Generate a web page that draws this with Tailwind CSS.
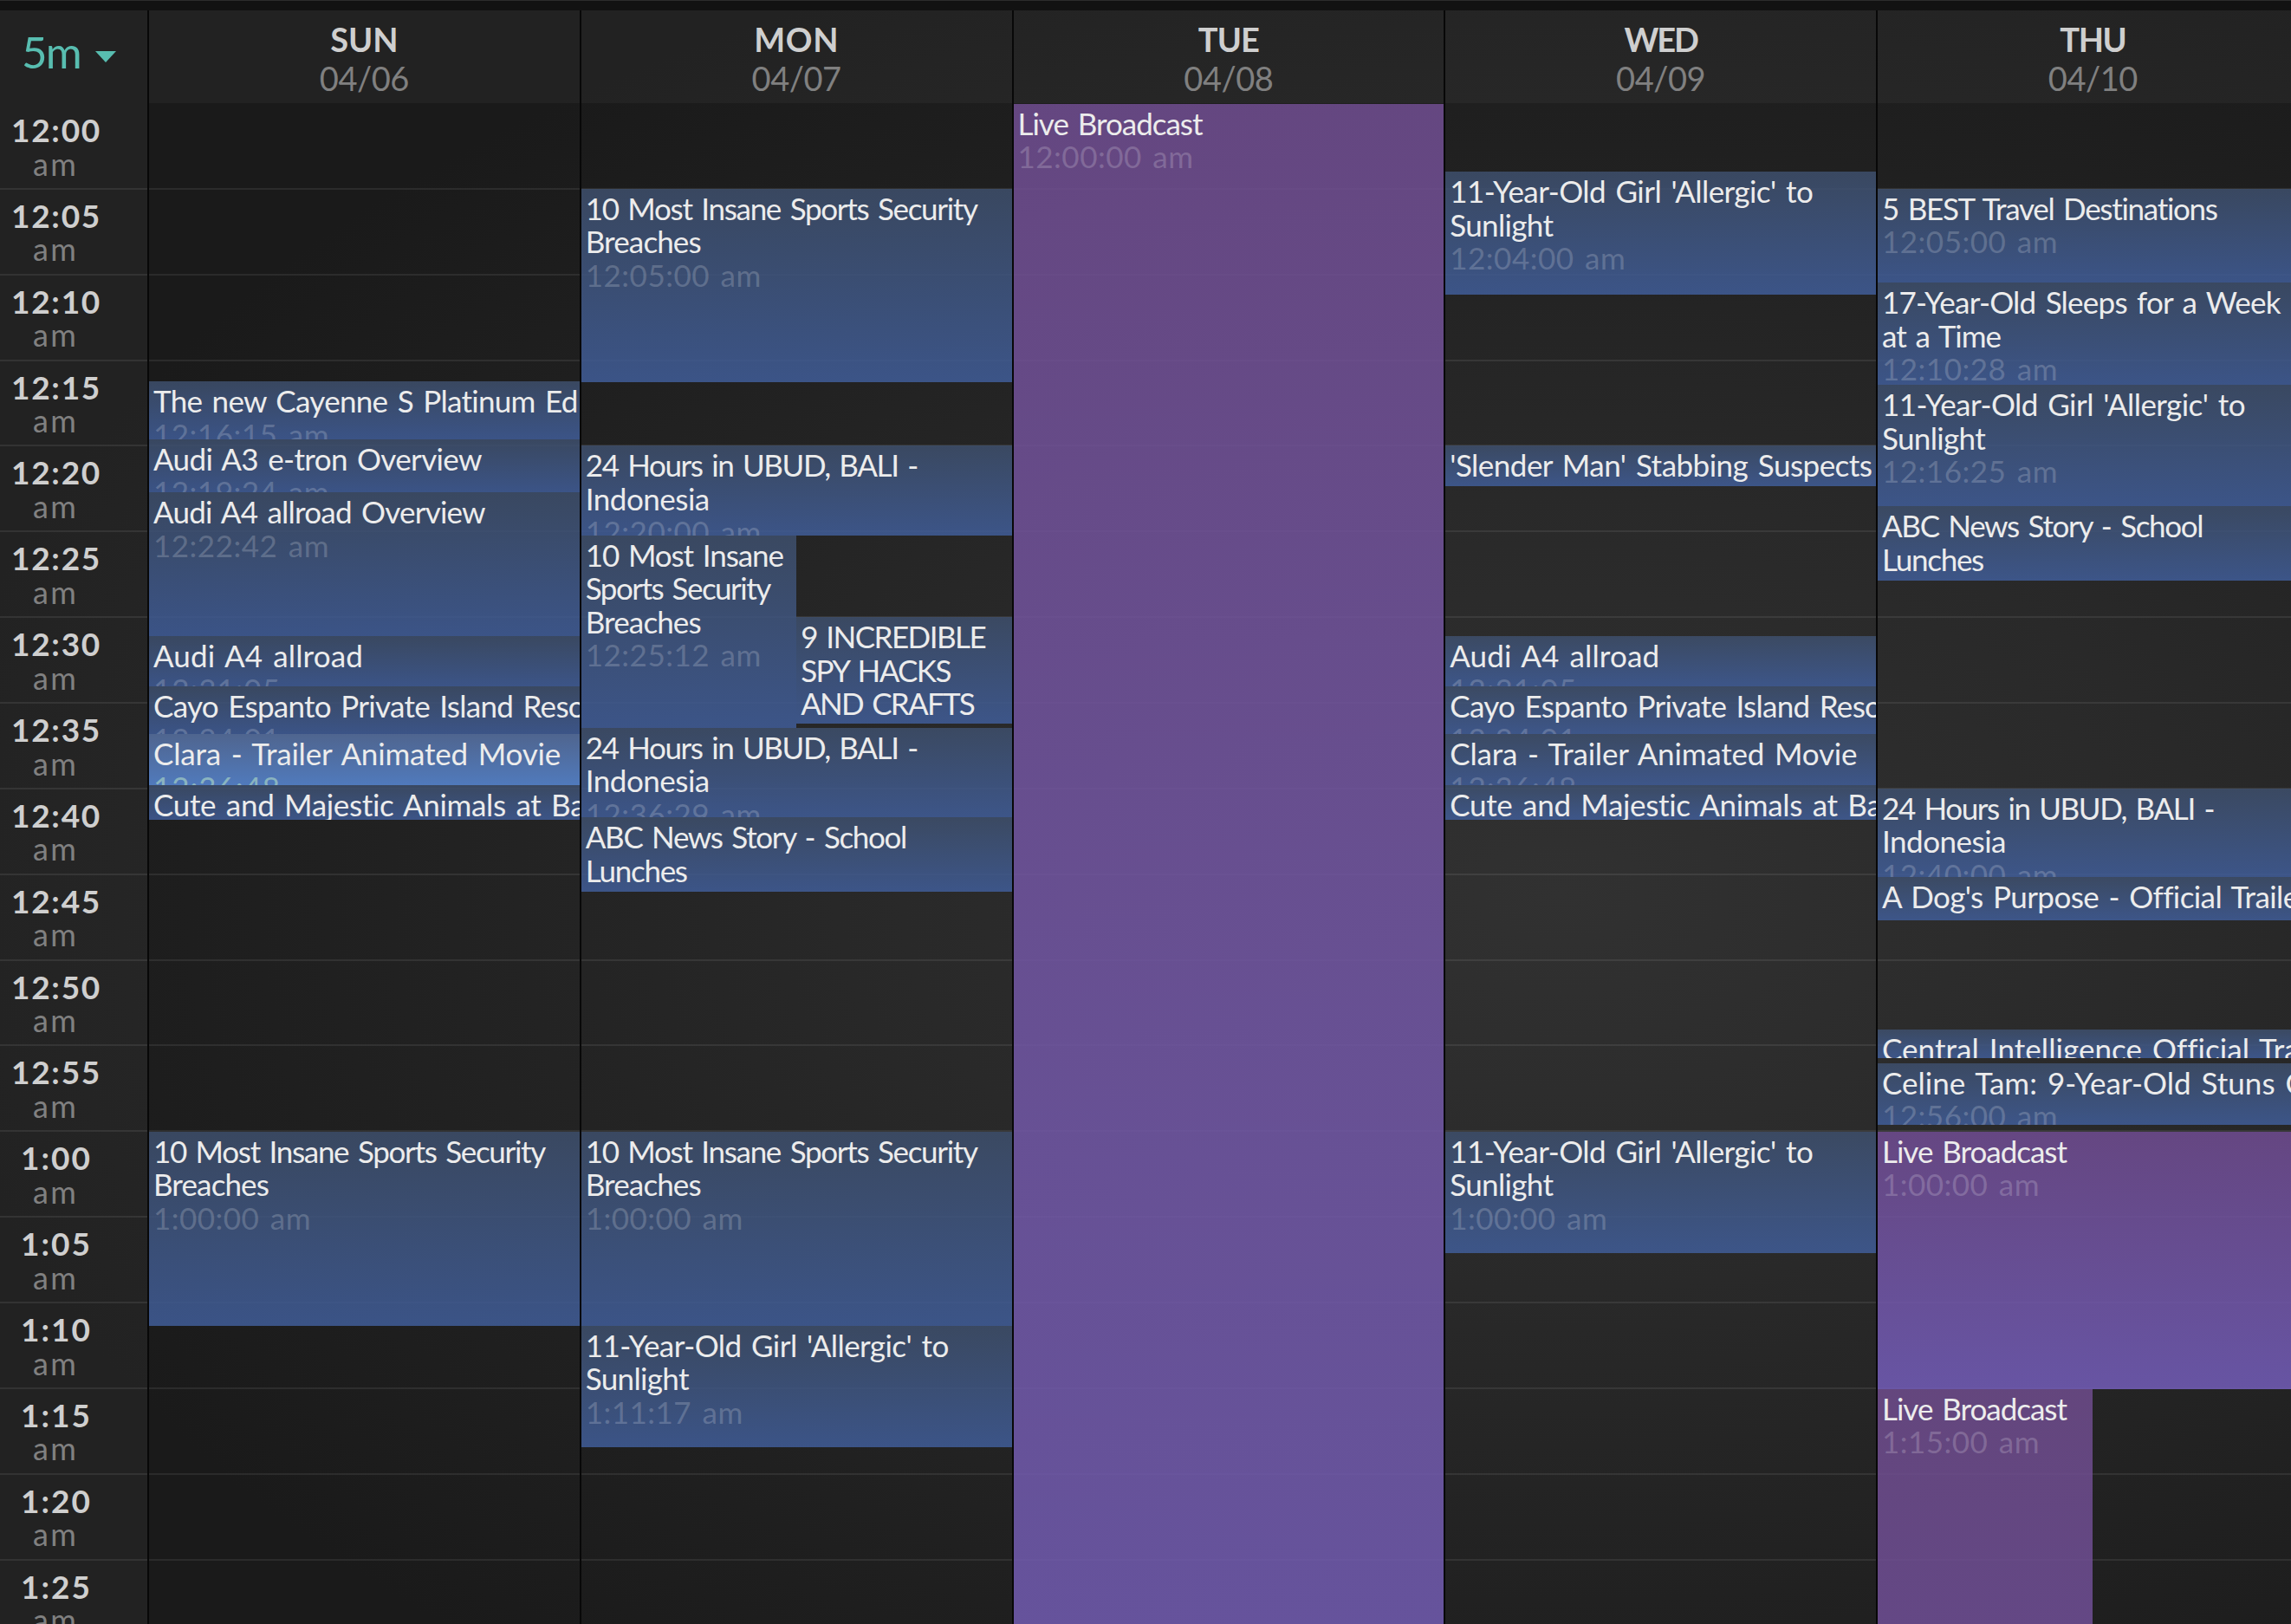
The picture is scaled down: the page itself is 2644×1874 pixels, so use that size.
<!DOCTYPE html>
<html lang="en">
  <head>
    <meta charset="UTF-8" />
    <meta name="viewport" content="width=device-width, initial-scale=1.0" />
    <title>Schedule - Week</title>
    <script src="https://cdn.jsdelivr.net/npm/@tailwindcss/browser@4"></script>
  </head>
  <body
    class="h-[1874px] w-[2644px] overflow-hidden bg-[#1a1a1a] font-['Lato','Open_Sans',sans-serif]"
  >
    <div
      class="flex h-[1874px] w-[2644px] flex-col overflow-hidden bg-[radial-gradient(ellipse_1900px_1150px_at_1800px_1030px,#313131_0%,#292929_40%,#202020_75%,#1a1a1a_100%)]"
    >
      <div class="h-3 shrink-0 border-t border-[#2c2c2c] bg-[#121212]"></div>

      <!-- Header -->
      <header class="flex h-[107px] shrink-0 bg-white/4">
        <button
          class="flex w-[170px] shrink-0 items-start pl-[25px] pt-[17px] text-[51px] leading-[61px] text-[#58bdb0]"
        >
          <span data-w="68" data-font="400 51px Lato" class="whitespace-nowrap">5m</span>
          <svg class="mt-[30px] ml-[17px] h-[13px] w-6 shrink-0" viewBox="0 0 24 13">
            <path d="M0 0h24L12 13z" fill="#58bdb0" />
          </svg>
        </button>
        <div id="days" class="flex"></div>
      </header>

      <!-- Schedule -->
      <main class="relative flex grow overflow-hidden">
        <div
          id="hours"
          class="flex w-[170px] shrink-0 flex-col bg-white/4"
        ></div>
        <div
          id="lines"
          class="pointer-events-none absolute inset-x-0 top-0 flex flex-col pt-px"
        ></div>
        <div id="columns" class="relative flex"></div>
      </main>
    </div>

    <script>
      const days = [
        ["SUN", "04/06", 78],
        ["MON", "04/07", 98],
        ["TUE", "04/08", 70],
        ["WED", "04/09", 84],
        ["THU", "04/10", 76],
      ];

      // title lines: [text, width]
      const sports = [["10 Most Insane Sports Security", 452], ["Breaches", 133]];
      const girl = [["11-Year-Old Girl 'Allergic' to", 419], ["Sunlight", 119]];
      const bali = [["24 Hours in UBUD, BALI -", 383], ["Indonesia", 143]];
      const abc = [["ABC News Story - School", 371], ["Lunches", 117]];
      const live = [["Live Broadcast", 213]];

      const themes = {
        video: "bg-linear-to-b from-[#3e4f6c]/85 to-[#405d99]/85",
        active: "bg-linear-to-b from-[#4f658f] to-[#507abc]",
        live: "bg-linear-to-b from-[#704c92]/85 to-[#735dba]/85",
        liveLong: "bg-linear-to-b from-[#714e92]/85 to-[#725cb2]/85",
        liveHalf: "bg-linear-to-b from-[#6f4c8d]/85 to-[#704f97]/85",
      };

      // start and end are offsets in the day column
      const schedule = [
        [
          { start: 321, end: 387.5, title: [["The new Cayenne S Platinum Ed", 491]], time: "12:16:15 am" },
          { start: 387.5, end: 449, title: [["Audi A3 e-tron Overview", 380]], time: "12:19:24 am" },
          { start: 449, end: 615, title: [["Audi A4 allroad Overview", 384]], time: "12:22:42 am" },
          { start: 615, end: 672.5, title: [["Audi A4 allroad", 243]], time: "12:31:05" },
          { start: 672.5, end: 728, title: [["Cayo Espanto Private Island Reso", 498]], time: "12:34:01" },
          { start: 728, end: 786.5, title: [["Clara - Trailer Animated Movie", 473]], time: "12:36:48", theme: "active" },
          { start: 786.5, end: 826.5, title: [["Cute and Majestic Animals at Ba", 500]] },
          { start: 1186.5, end: 1410.5, title: sports, time: "1:00:00 am" },
        ],
        [
          { start: 98.5, end: 322, title: sports, time: "12:05:00 am" },
          { start: 395, end: 498.5, title: bali, time: "12:20:00 am" },
          {
            start: 498.5,
            end: 720.5,
            split: [
              { start: 0, end: 222, title: [["10 Most Insane", 228], ["Sports Security", 213], ["Breaches", 133]], time: "12:25:12 am" },
              { start: 94.5, end: 217, title: [["9 INCREDIBLE", 213], ["SPY HACKS", 174], ["AND CRAFTS", 200]] },
            ],
          },
          { start: 720.5, end: 824, title: bali, time: "12:36:29 am" },
          { start: 824, end: 910, title: abc },
          { start: 1186.5, end: 1410.5, title: sports, time: "1:00:00 am" },
          { start: 1410.5, end: 1551, title: girl, time: "1:11:17 am" },
        ],
        [{ start: 0.5, end: 1760, title: live, time: "12:00:00 am", theme: "liveLong" }],
        [
          { start: 79, end: 220.5, title: girl, time: "12:04:00 am" },
          { start: 395, end: 441.5, title: [["'Slender Man' Stabbing Suspects", 488]] },
          { start: 615, end: 672.5, title: [["Audi A4 allroad", 243]], time: "12:31:05" },
          { start: 672.5, end: 728, title: [["Cayo Espanto Private Island Reso", 498]], time: "12:34:01" },
          { start: 728, end: 786.5, title: [["Clara - Trailer Animated Movie", 473]], time: "12:36:48" },
          { start: 786.5, end: 826.5, title: [["Cute and Majestic Animals at Ba", 500]] },
          { start: 1186.5, end: 1327, title: girl, time: "1:00:00 am" },
        ],
        [
          { start: 98.5, end: 207, title: [["5 BEST Travel Destinations", 390]], time: "12:05:00 am" },
          { start: 207, end: 325, title: [["17-Year-Old Sleeps for a Week", 461], ["at a Time", 138]], time: "12:10:28 am" },
          { start: 325, end: 465, title: girl, time: "12:16:25 am" },
          { start: 465, end: 551, title: abc },
          { start: 790.5, end: 893, title: bali, time: "12:40:00 am" },
          { start: 893, end: 943, title: [["A Dog's Purpose - Official Traile", 481]] },
          { start: 1068.5, end: 1101.5, title: [["Central Intelligence Official Tra", 481]] },
          { start: 1107.5, end: 1178.5, title: [["Celine Tam: 9-Year-Old Stuns C", 490]], time: "12:56:00 am" },
          { start: 1186.5, end: 1483.5, title: live, time: "1:00:00 am", theme: "live" },
          { start: 1483.5, end: 1760, title: live, time: "1:15:00 am", theme: "liveHalf", half: true },
        ],
      ];

      const timeWidths = { 8: 147, 10: 182, 11: 203 };
      const wordGap = 3;

      function label(text, width, font) {
        return `<span data-w="${width}" data-font="${font}">${text}</span>`;
      }

      function eventHtml(e, prevEnd, width) {
        const lines = e.title
          .map(([text, w]) => `<div>${label(text, w, "400 35px Lato")}</div>`)
          .join("");
        const time = e.time
          ? `<div class="${e.theme === "active" ? "text-[#a5d0c4]/70" : "text-white/20"}">${label(e.time, timeWidths[e.time.length], "400 35px Lato")}</div>`
          : "";
        return `<div class="${themes[e.theme || "video"]} ${width} shrink-0 overflow-hidden whitespace-nowrap pt-[3px] pl-[5px] text-[35px] leading-[38.6px] text-[#ececec]"
          style="margin-top:${e.start - prevEnd}px;height:${e.end - e.start}px">${lines}${time}</div>`;
      }

      function columnHtml(events) {
        let prevEnd = 0;
        return events
          .map((e) => {
            const html = e.split
              ? `<div class="flex shrink-0 items-start" style="margin-top:${e.start - prevEnd}px;height:${e.end - e.start}px">${e.split
                  .map((s) => eventHtml(s, 0, "w-1/2"))
                  .join("")}</div>`
              : eventHtml(e, prevEnd, e.half ? "w-1/2" : "w-full");
            prevEnd = e.end;
            return html;
          })
          .join("");
      }

      document.getElementById("days").innerHTML = days
        .map(
          ([name, date, w]) => `<div class="w-[498.75px] shrink-0 border-l-2 border-[#080808] pt-[11px] text-center text-[38px] leading-[45px]">
            <div class="font-bold text-[#cfcfcf]">${label(name, w, "700 38px Lato")}</div>
            <div class="text-[#808080]">${label(date, 103, "400 38px Lato")}</div>
          </div>`
        )
        .join("");

      const hours = [];
      for (let m = 0; m < 90; m += 5) {
        hours.push(`${m < 60 ? 12 : 1}:${String(m % 60).padStart(2, "0")}`);
      }

      document.getElementById("hours").innerHTML = hours
        .map(
          (h) => `<div class="h-[98.86px] w-[130px] shrink-0 pt-3 text-center leading-[38.6px]">
            <div class="text-[37px] font-bold text-[#cfcfcf]">${label(h, h.length === 5 ? 104 : 82, "700 37px Lato")}</div>
            <div class="pr-[2px] text-[36px] text-[#808080]">${label("am", 52, "400 36px Lato")}</div>
          </div>`
        )
        .join("");

      document.getElementById("lines").innerHTML = hours
        .map(() => `<div class="h-[98.86px] shrink-0 border-b-2 border-white/8"></div>`)
        .join("");

      document.getElementById("columns").innerHTML = schedule
        .map(
          (events) => `<div class="flex w-[498.75px] shrink-0 flex-col border-l-2 border-[#080808]">${columnHtml(events)}</div>`
        )
        .join("");

      // track each label to its own width
      const ctx = document.createElement("canvas").getContext("2d");
      document.querySelectorAll("[data-w]").forEach((el) => {
        const text = el.textContent;
        ctx.font = el.dataset.font;
        const natural =
          ctx.measureText(text).width + wordGap * (text.split(" ").length - 1);
        const spacing = (el.dataset.w - natural) / text.length;
        el.style.wordSpacing = `${wordGap}px`;
        el.style.letterSpacing = `${spacing.toFixed(3)}px`;
      });
    </script>
  </body>
</html>
